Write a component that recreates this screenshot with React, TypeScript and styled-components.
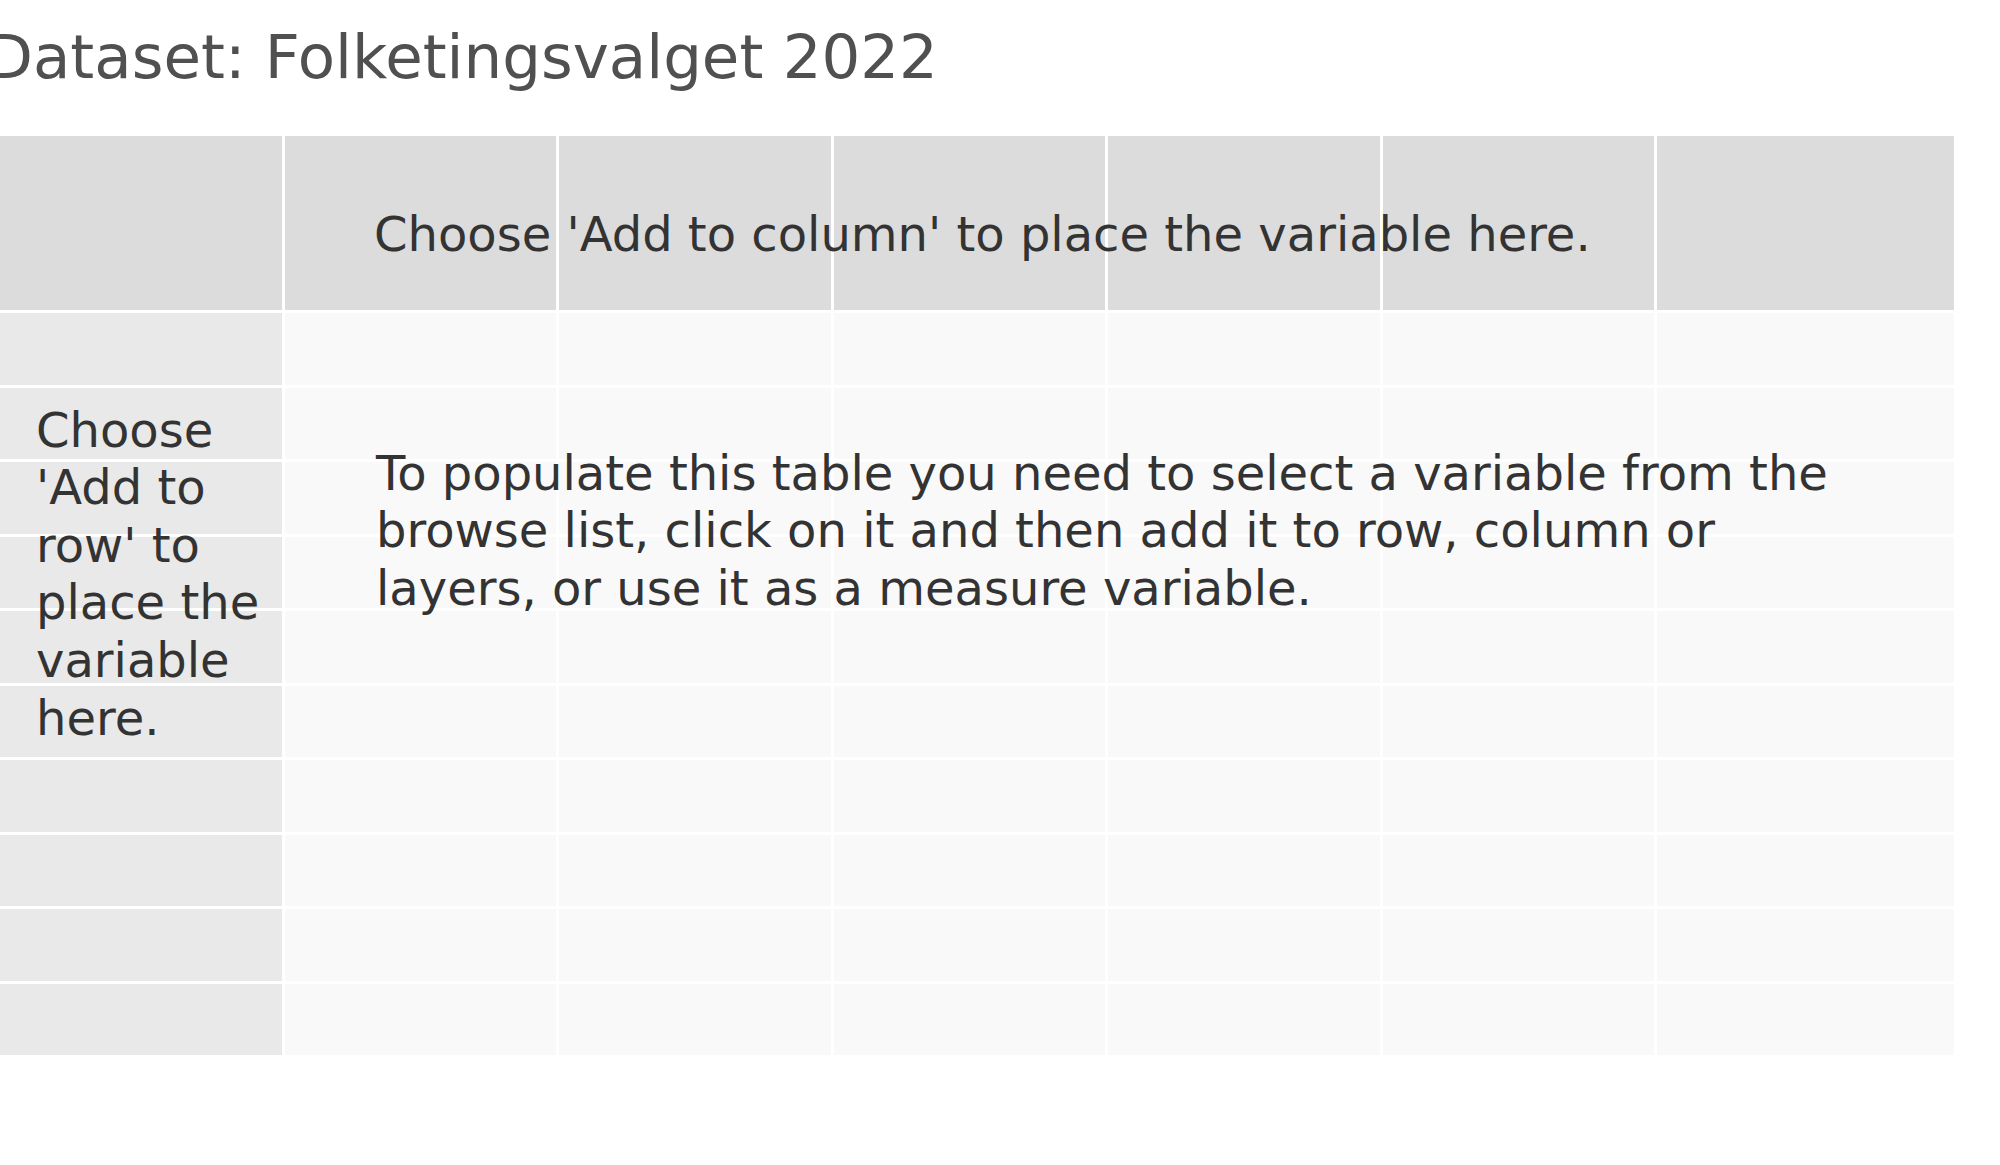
import React from 'react'
import styled, { createGlobalStyle } from 'styled-components'

const GlobalStyle = createGlobalStyle`
  html, body {
    margin: 0;
    padding: 0;
    background: #ffffff;
  }
  body {
    font-family: Verdana, "DejaVu Sans", sans-serif;
    color: #333333;
    overflow: hidden;
  }
`

const Page = styled.div`
  width: 2000px;
  padding-top: 27px;
  overflow: hidden;
`

const Title = styled.h1`
  margin: 0 0 0 -14px;
  font-size: 61px;
  line-height: 60px;
  font-weight: normal;
  color: #505050;
  white-space: nowrap;
`

// empty crosstab: a grid of placeholder cells with the hints laid over the same tracks
const Crosstab = styled.div`
  display: grid;
  width: 1954px;
  margin-top: 49px;
  grid-template-columns: 281.5px repeat(5, 271.5px) 297px;
  grid-template-rows: 174px repeat(10, 71.5px);
  gap: 3px;
`

type CellKind = 'header' | 'stub' | 'body'

const cellColors: Record<CellKind, string> = {
  header: '#dcdcdc',
  stub: '#e9e9e9',
  body: '#f9f9f9',
}

const Cell = styled.div<{ $kind: CellKind; $row: number; $col: number }>`
  grid-row: ${({ $row }) => $row};
  grid-column: ${({ $col }) => $col};
  background: ${({ $kind }) => cellColors[$kind]};
`

const Hint = styled.p`
  margin: 0;
  align-self: start;
  font-size: 48px;
  line-height: 57.6px;
  color: #333333;
`

const ColumnHint = styled(Hint)`
  grid-row: 1;
  grid-column: 2 / -1;
  padding: 70px 0 0 89.5px;
  white-space: nowrap;
`

const RowHint = styled(Hint)`
  grid-row: 2 / -1;
  grid-column: 1;
  padding: 88.6px 5.5px 0 36px;
`

const TableHint = styled(Hint)`
  grid-row: 2 / -1;
  grid-column: 2 / -1;
  padding: 131.6px 98px 0 91.5px;
`

const COLS = 7
const BODY_ROWS = 10

export default function App() {
  const cells: React.ReactNode[] = []
  for (let c = 1; c <= COLS; c++) {
    cells.push(<Cell key={`h${c}`} $kind="header" $row={1} $col={c} />)
  }
  for (let r = 2; r <= BODY_ROWS + 1; r++) {
    for (let c = 1; c <= COLS; c++) {
      cells.push(<Cell key={`b${r}-${c}`} $kind={c === 1 ? 'stub' : 'body'} $row={r} $col={c} />)
    }
  }

  return (
    <>
      <GlobalStyle />
      <Page>
        <Title>Dataset: Folketingsvalget 2022</Title>
        <Crosstab>
          {cells}
          <ColumnHint>Choose 'Add to column' to place the variable here.</ColumnHint>
          <RowHint>Choose 'Add to row' to place the variable here.</RowHint>
          <TableHint>
            To populate this table you need to select a variable from the browse list, click on it and then add it
            to row, column or layers, or use it as a measure variable.
          </TableHint>
        </Crosstab>
      </Page>
    </>
  )
}
